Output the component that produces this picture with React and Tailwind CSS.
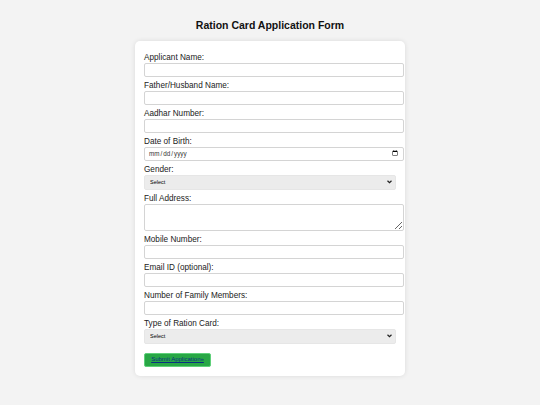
const fields = [
  { label: "Applicant Name:", type: "text" },
  { label: "Father/Husband Name:", type: "text" },
  { label: "Aadhar Number:", type: "text" },
  { label: "Date of Birth:", type: "date" },
  { label: "Gender:", type: "select" },
  { label: "Full Address:", type: "textarea" },
  { label: "Mobile Number:", type: "text" },
  { label: "Email ID (optional):", type: "text" },
  { label: "Number of Family Members:", type: "text" },
  { label: "Type of Ration Card:", type: "select" },
];

const inputCls =
  "block box-content w-full h-[12px] px-[3px] border border-[#d4d4d4] rounded-[2px] bg-white text-[7px] outline-none";

function Field({ label, type }) {
  let control;
  if (type === "select") {
    control = (
      <div className="relative">
        <select className="block appearance-none w-full h-[15px] leading-[13px] px-[5px] border border-[#e6e6e6] rounded-[2px] bg-[#ececec] text-[5.5px] text-black">
          <option>Select</option>
        </select>
        <svg
          className="absolute right-[4px] top-[5.5px] w-[5px] h-[4px] pointer-events-none"
          viewBox="0 0 10 8"
        >
          <path d="M1 1.5 L5 5.5 L9 1.5" stroke="#222" strokeWidth="2.4" fill="none" />
        </svg>
      </div>
    );
  } else if (type === "textarea") {
    control = (
      <textarea className="block box-content w-full h-[25px] px-[3px] border border-[#d4d4d4] rounded-[2px] bg-white text-[7px] resize-y" />
    );
  } else if (type === "date") {
    control = (
      <input
        type="date"
        className="block box-content w-full h-[12px] px-[3px] border border-[#d4d4d4] rounded-[2px] bg-white text-[6.3px] text-[#333]"
      />
    );
  } else {
    control = <input type="text" className={inputCls} />;
  }
  return (
    <div className="mb-[4px]">
      <label className="block text-[8.2px] leading-[9px] mb-[1px] text-[#222]">{label}</label>
      {control}
    </div>
  );
}

export default function App() {
  return (
    <div className="min-h-[405px] bg-[#f3f3f3] pt-[18px] font-['Liberation_Sans',Arial,sans-serif]">
      <h2 className="text-center text-[10.5px] font-bold leading-[14px] text-[#111] mb-[9px]">
        Ration Card Application Form
      </h2>
      <div className="mx-auto w-[270px] bg-white rounded-[5px] shadow-[0_0_5px_rgba(0,0,0,0.1)] px-[9px] pt-[11.5px] pb-[9px]">
        <form>
          {fields.map((f, i) => (
            <Field key={i} {...f} />
          ))}
          <button
            type="button"
            className="block mt-[9px] h-[14px] w-[67px] bg-[#28a745] border border-[#5fd07a] rounded-[2px] text-[6px] text-[#0a2f80] underline"
          >
            Submit Application»
          </button>
        </form>
      </div>
    </div>
  );
}
